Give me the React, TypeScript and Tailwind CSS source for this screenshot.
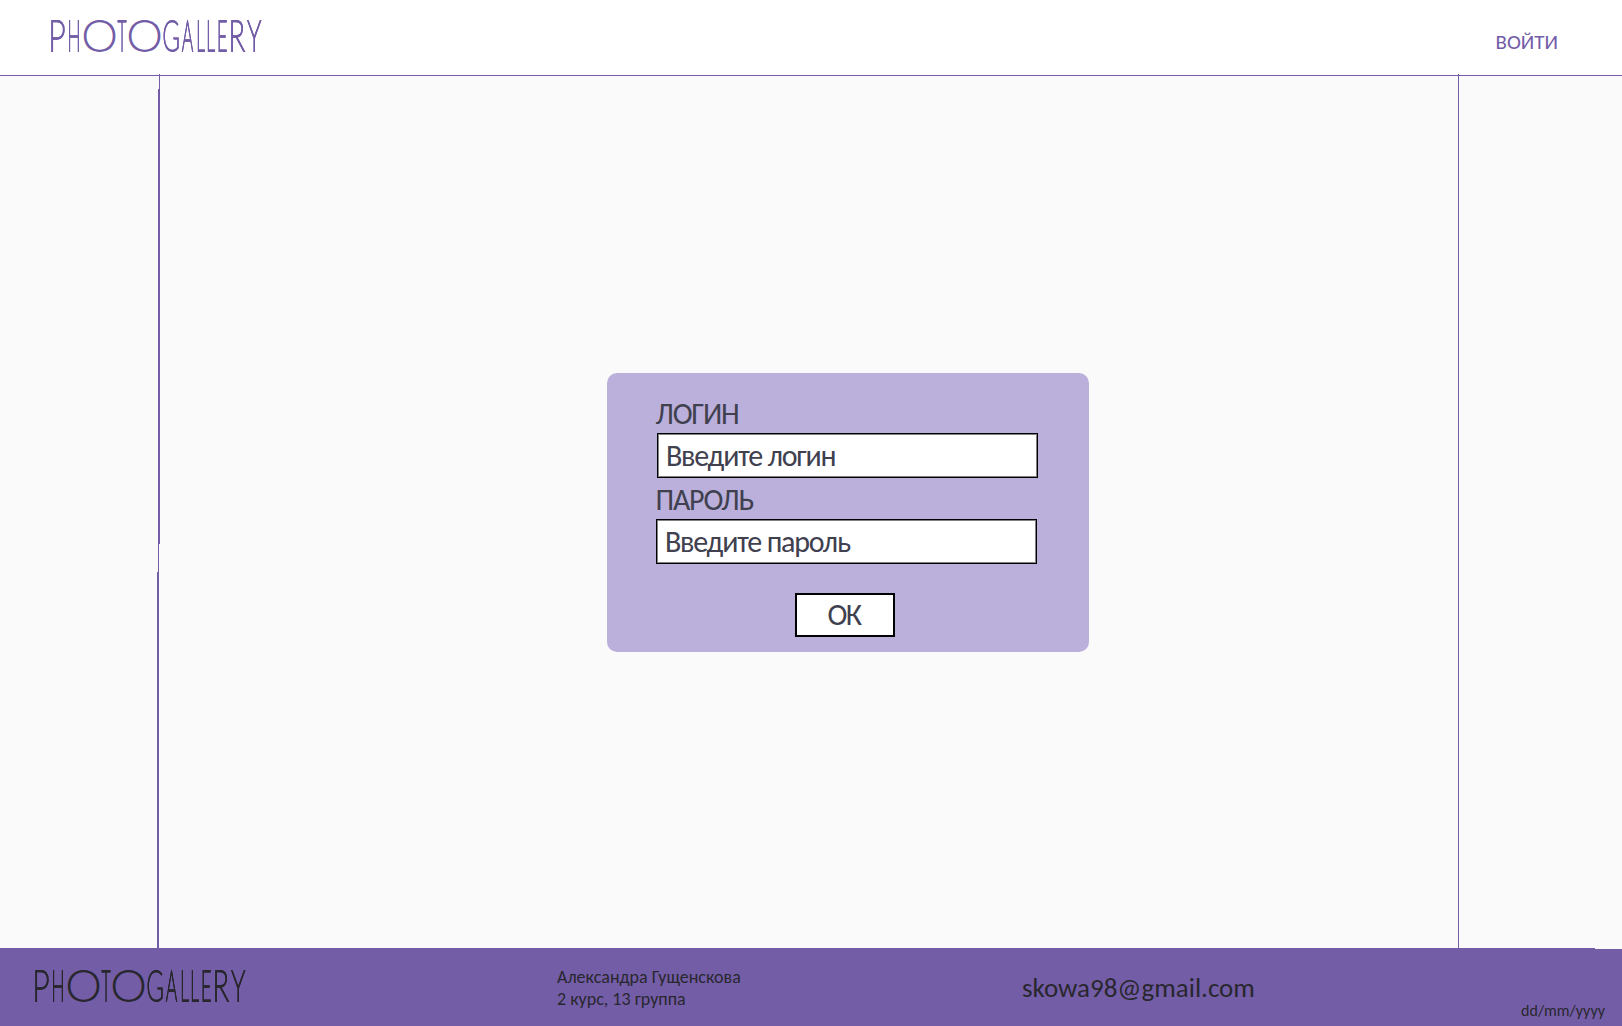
type Glyph = { ch: string; x: number; w: number; inkL: number; inkR: number };

const FONT_SIZE = 42.6;
const STROKE = 1.9;

// x and w give the drawn span of each letter; inkL and inkR are its ink edges in em.
const LETTERS: Glyph[] = [
  { ch: "P", x: 0.6, w: 15.2, inkL: 0.1, inkR: 0.54 },
  { ch: "H", x: 18.2, w: 11.6, inkL: 0.1, inkR: 0.66 },
  { ch: "O", x: 33, w: 33.3, inkL: 0.05, inkR: 0.74 },
  { ch: "T", x: 67, w: 10.3, inkL: 0.01, inkR: 0.57 },
  { ch: "O", x: 78, w: 33.3, inkL: 0.05, inkR: 0.74 },
  { ch: "G", x: 112.6, w: 16.4, inkL: 0.05, inkR: 0.67 },
  { ch: "A", x: 131.1, w: 13, inkL: 0.01, inkR: 0.65 },
  { ch: "L", x: 147.1, w: 8.8, inkL: 0.1, inkR: 0.5 },
  { ch: "L", x: 157.1, w: 8.8, inkL: 0.1, inkR: 0.5 },
  { ch: "E", x: 167.8, w: 9.5, inkL: 0.1, inkR: 0.53 },
  { ch: "R", x: 180.4, w: 15.4, inkL: 0.1, inkR: 0.6 },
  { ch: "Y", x: 196.8, w: 15.6, inkL: 0.01, inkR: 0.59 },
];

function Logo({ className }: { className: string }) {
  return (
    <svg
      width="216"
      height="36"
      viewBox="0 0 216 36"
      role="img"
      aria-label="Photogallery"
      className={`shrink-0 overflow-visible ${className}`}
    >
      {LETTERS.map((l, i) => {
        const sx = (l.w - STROKE) / ((l.inkR - l.inkL) * FONT_SIZE);
        const tx = l.x + STROKE / 2 - l.inkL * FONT_SIZE * sx;
        // Condensed letters lose stem weight, so a hard offset copy restores it.
        return (
          <g key={i} className={sx < 0.9 ? "[filter:drop-shadow(0.8px_0_0_currentColor)]" : ""}>
            <text
              transform={`translate(${tx} 32.2) scale(${sx} 1)`}
              fontSize={FONT_SIZE}
              stroke="currentColor"
              strokeWidth={STROKE}
              className="fill-current font-['Lato',sans-serif] font-thin"
            >
              {l.ch}
            </text>
          </g>
        );
      })}
    </svg>
  );
}

function Header() {
  return (
    <header className="flex h-[76px] items-start justify-between border-b border-[#735da7] bg-white pl-[50px] pr-[64px] text-[#735da7]">
      <Logo className="mt-[19px]" />
      <a href="#" className="mt-[29px] text-[21px] leading-[26px]">
        ВОЙТИ
      </a>
    </header>
  );
}

function LeftRule() {
  return (
    <div className="-mt-[2px] flex w-[3px] flex-col items-start">
      <div className="ml-[2px] h-[15px] w-px bg-[#735da7]" />
      <div className="ml-px h-[455px] w-[2px] bg-[#735da7]" />
      <div className="ml-px h-[28px] w-px bg-[#735da7]" />
      <div className="w-[2px] grow bg-[#735da7]" />
    </div>
  );
}

function Field({ label, hint, type, className }: { label: string; hint: string; type: string; className: string }) {
  return (
    <label className="flex flex-col">
      <span className="ml-[48.5px] h-[33px] leading-[27px]">{label}</span>
      <input
        type={type}
        placeholder={hint}
        className={`h-[45px] w-[381px] border border-black bg-white pl-2 shadow-[inset_0_0_0_1px_#808080] outline-none placeholder:text-[#40404f] placeholder:opacity-100 ${className}`}
      />
    </label>
  );
}

function LoginCard() {
  return (
    <form className="flex h-[279px] w-[482px] flex-col rounded-[10px] bg-[#bbb0dc] pt-[27px] text-[30px] tracking-[-1.2px] text-[#40404f]">
      <Field label="ЛОГИН" hint="Введите логин" type="text" className="ml-[50px]" />
      <div className="h-2" />
      <Field label="ПАРОЛЬ" hint="Введите пароль" type="text" className="ml-[49px]" />
      <button
        type="button"
        className="ml-[188px] mt-[29px] h-[44px] w-[100px] border-2 border-black bg-white pr-[2px] leading-[39px] tracking-[-1.5px]"
      >
        <span className="block h-[40px]">ОК</span>
      </button>
    </form>
  );
}

function Footer() {
  return (
    <footer className="text-[#29272e]">
      <div className="h-px w-[1595px] bg-[#735da7]" />
      <div className="flex h-[77px] items-start bg-[#735da7]">
        <Logo className="ml-[34px] mt-[20px]" />
        <p className="ml-[307px] mt-[17px] w-[190px] whitespace-nowrap text-[18px] leading-[22px]">
          Александра Гущенскова
          <br />2 курс, 13 группа
        </p>
        <p className="ml-[275px] mt-[23px] w-[240px] text-[27px] leading-[32px]">skowa98@gmail.com</p>
        <p className="ml-auto mr-[17px] mt-[52px] text-[16px] leading-5">dd/mm/yyyy</p>
      </div>
    </footer>
  );
}

export default function App() {
  return (
    <div className="flex h-[1026px] w-[1622px] flex-col overflow-hidden bg-[#fafafa] font-['Carlito',sans-serif]">
      <Header />
      <main className="flex grow pl-[157px]">
        <LeftRule />
        <div className="w-[1298px] pl-[447px] pt-[297px]">
          <LoginCard />
        </div>
        <div className="-mt-[2px] w-px bg-[#735da7]" />
      </main>
      <Footer />
    </div>
  );
}
